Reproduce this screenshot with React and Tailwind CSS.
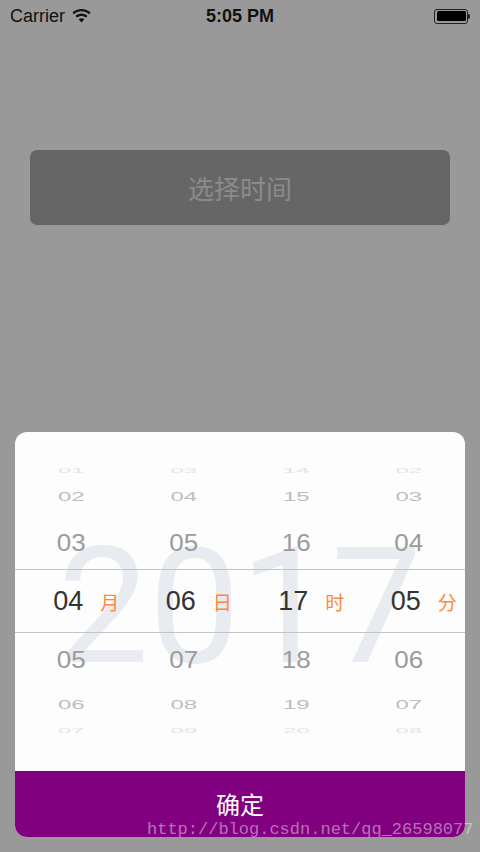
import React from 'react';

const columns = [
  { values: ['01', '02', '03', '04', '05', '06', '07'], unit: '月' },
  { values: ['03', '04', '05', '06', '07', '08', '09'], unit: '日' },
  { values: ['14', '15', '16', '17', '18', '19', '20'], unit: '时' },
  { values: ['02', '03', '04', '05', '06', '07', '08'], unit: '分' },
];

// row slots from top (-3) to bottom (+3)
const rows = [
  { h: 'h-[25px]', text: 'text-[24px] text-[#e4e4e4] scale-y-[0.28]' },
  { h: 'h-[28px]', text: 'text-[24px] text-[#bdbdbd] scale-y-[0.56]' },
  { h: 'h-[58px] pt-[6px]', text: 'text-[26px] text-[#9b9b9b] scale-y-[0.92]' },
  { h: 'h-[64px] border-y border-[#c4c4c4]', text: 'text-[27px] text-[#333333] -translate-x-[3px]', selected: true },
  { h: 'h-[57px] pb-[3px]', text: 'text-[26px] text-[#9b9b9b] scale-y-[0.92]' },
  { h: 'h-[30px]', text: 'text-[24px] text-[#bdbdbd] scale-y-[0.56]' },
  { h: 'h-[22px]', text: 'text-[24px] text-[#e4e4e4] scale-y-[0.28]' },
];

const WifiIcon = () => (
  <svg width="19" height="14" viewBox="0 0 19 14" fill="#111">
    <path d="M9.5 0C6 0 2.8 1.3 0.4 3.5l1.6 1.7C4 3.4 6.6 2.3 9.5 2.3s5.5 1.1 7.5 2.9l1.6-1.7C16.2 1.3 13 0 9.5 0z" />
    <path d="M9.5 4.6c-2.3 0-4.4 0.9-6 2.3l1.6 1.7c1.2-1 2.7-1.7 4.4-1.7s3.2 0.7 4.4 1.7l1.6-1.7c-1.6-1.4-3.7-2.3-6-2.3z" />
    <path d="M9.5 9.2c-1.1 0-2.1 0.4-2.9 1.1L9.5 13.4l2.9-3.1c-0.8-0.7-1.8-1.1-2.9-1.1z" />
  </svg>
);

const StatusBar = () => (
  <div className="relative h-8 flex items-center px-[10px] text-[#111] font-['Liberation_Sans',sans-serif]">
    <div className="flex items-center gap-[7px]">
      <span className="text-[18px]">Carrier</span>
      <WifiIcon />
    </div>
    <span className="absolute left-1/2 -translate-x-1/2 text-[18px] font-bold">5:05 PM</span>
    <div className="ml-auto flex items-center">
      <div className="w-[34px] h-[15px] rounded-[3px] border border-[#222] p-[1.5px]">
        <div className="w-full h-full rounded-[1.5px] bg-black" />
      </div>
      <div className="w-[2px] h-[5px] bg-[#222] rounded-r-sm" />
    </div>
  </div>
);

const PickerColumn = ({ values, unit }) => (
  <div className="flex-1 flex flex-col">
    {rows.map((row, i) => (
      <div key={i} className={`${row.h} relative flex items-center justify-center`}>
        <span className={`${row.text} leading-none`}>{values[i]}</span>
        {row.selected && (
          <span className="absolute left-[calc(50%+29px)] text-[19px] text-[#fd8a3c] font-['Noto_Sans_CJK_SC',sans-serif] leading-none">
            {unit}
          </span>
        )}
      </div>
    ))}
  </div>
);

export default function App() {
  return (
    <div className="relative w-[480px] h-[852px] bg-[#999999] flex flex-col overflow-hidden font-['Liberation_Sans','Noto_Sans_CJK_SC',sans-serif]">
      <StatusBar />

      <button className="mt-[118px] mx-[30px] h-[75px] rounded-[7px] bg-[#666666] flex items-center justify-center text-[26px] text-[#8b8b8b] font-['Noto_Sans_CJK_SC',sans-serif]">
        选择时间
      </button>

      <div className="mt-auto mx-[15px] mb-[15px] h-[405px] rounded-[12px] bg-[#fdfdfd] overflow-hidden flex flex-col">
        <div className="relative flex-1">
          <div className="absolute inset-x-0 top-[94px] flex justify-center pointer-events-none">
            <span className="text-[162px] leading-none font-normal text-[#e8ecf1] font-['Roboto','Liberation_Sans',sans-serif]">
              2017
            </span>
          </div>
          <div className="relative flex pt-[26px]">
            {columns.map((c) => (
              <PickerColumn key={c.unit} values={c.values} unit={c.unit} />
            ))}
          </div>
        </div>
        <div className="h-[66px] bg-[#800080] flex items-center justify-center text-white text-[24px] font-['Noto_Sans_CJK_SC',sans-serif]">
          确定
        </div>
      </div>

      <span className="absolute left-[147px] top-[821px] text-[17px] leading-none text-white/45 font-['Liberation_Mono',monospace] pointer-events-none">
        http://blog.csdn.net/qq_26598077
      </span>
    </div>
  );
}
